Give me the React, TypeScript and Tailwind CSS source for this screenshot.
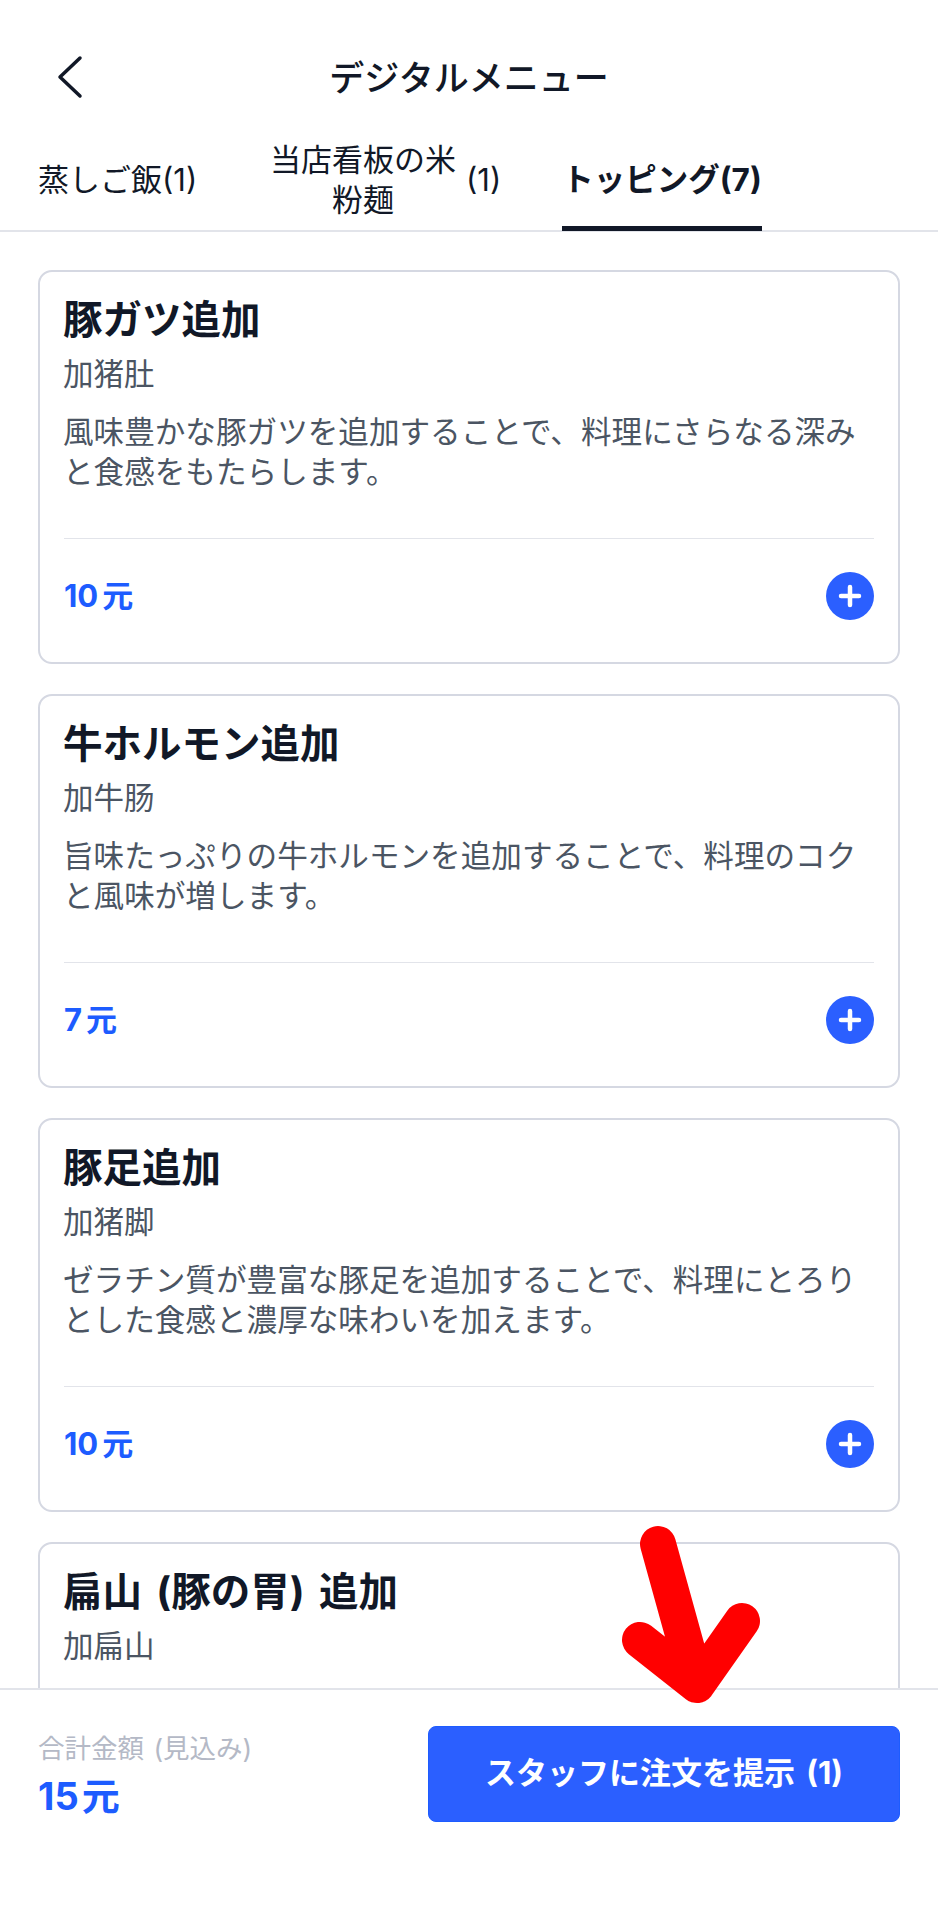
const items = [
  {
    title: '豚ガツ追加',
    sub: '加猪肚',
    desc: '風味豊かな豚ガツを追加することで、料理にさらなる深みと食感をもたらします。',
    price: '10',
  },
  {
    title: '牛ホルモン追加',
    sub: '加牛肠',
    desc: '旨味たっぷりの牛ホルモンを追加することで、料理のコクと風味が増します。',
    price: '7',
  },
  {
    title: '豚足追加',
    sub: '加猪脚',
    desc: 'ゼラチン質が豊富な豚足を追加することで、料理にとろりとした食感と濃厚な味わいを加えます。',
    price: '10',
  },
]

function PlusButton() {
  return (
    <button className="flex h-12 w-12 items-center justify-center rounded-full bg-[#2b5fff]" aria-label="追加">
      <svg width="26" height="26" viewBox="0 0 26 26" fill="none" stroke="white" strokeWidth="4.5" strokeLinecap="round">
        <path d="M13 4v18M4 13h18" />
      </svg>
    </button>
  )
}

function MenuCard({ item }: { item: (typeof items)[number] }) {
  return (
    <div className="h-[394px] shrink-0 rounded-[14px] border-2 border-[#d5d8e2] bg-white px-6 pt-6">
      <h3 className="-ml-px text-[39.5px] leading-[48px] font-bold text-[#111827]">{item.title}</h3>
      <p className="mt-[10px] -ml-px text-[30.5px] leading-[40px] text-[#4b5563]">{item.sub}</p>
      <p className="mt-[18px] -ml-px h-[80px] text-[30.6px] leading-[40px] text-[#4b5563]">{item.desc}</p>
      <div className="mt-[46px] border-t border-[#e2e4ea]" />
      <div className="mt-[33px] flex items-center justify-between">
        <span className="text-[31px] leading-[48px] font-bold text-[#1d5cff]">
          {item.price}
          <span className="ml-1">元</span>
        </span>
        <PlusButton />
      </div>
    </div>
  )
}

export default function App() {
  return (
    <div className="relative flex h-[1920px] w-[938px] flex-col overflow-hidden bg-white font-['Inter','Noto_Sans_CJK_JP',sans-serif] text-[#111827]">
      {/* Header */}
      <header className="relative flex h-[120px] shrink-0 items-start justify-center pt-[53px]">
        <svg className="absolute top-[55px] left-[56px]" width="28" height="44" viewBox="0 0 28 44" fill="none" stroke="#111827" strokeWidth="3.5" strokeLinecap="round" strokeLinejoin="round">
          <path d="M24 3L4 22l20 19" />
        </svg>
        <h1 className="text-[35px] leading-[50px] font-medium">デジタルメニュー</h1>
      </header>

      {/* Tabs */}
      <nav className="flex h-[112px] shrink-0 items-center border-b-2 border-[#e2e4ea] pt-[10px] pl-[38px] text-[31px]">
        <span className="w-[232px] shrink-0 whitespace-nowrap">蒸しご飯(1)</span>
        <span className="flex w-[292px] shrink-0 items-center">
          <span className="w-[186px] text-center leading-[40px]">当店看板の米粉麺</span>
          <span className="ml-2.5">(1)</span>
        </span>
        <span className="relative flex h-full w-[200px] shrink-0 items-center justify-center text-[31.5px] font-bold whitespace-nowrap">
          トッピング(7)
          <span className="absolute right-0 -bottom-[1px] left-0 h-[5px] bg-[#111827]" />
        </span>
      </nav>

      {/* List */}
      <main className="flex min-h-0 flex-1 flex-col gap-[30px] overflow-hidden px-[38px] pt-[38px]">
        {items.map((item) => (
          <MenuCard key={item.title} item={item} />
        ))}
        <div className="h-[394px] shrink-0 rounded-[14px] border-2 border-[#d5d8e2] bg-white px-6 pt-6">
          <h3 className="-ml-px text-[39.5px] leading-[48px] font-bold text-[#111827] [word-spacing:5px]">扁山 (豚の胃) 追加</h3>
          <p className="mt-[10px] -ml-px text-[30.5px] leading-[40px] text-[#4b5563]">加扁山</p>
        </div>
      </main>

      {/* Footer */}
      <footer className="flex h-[232px] shrink-0 items-start justify-between border-t-2 border-[#e2e4ea] bg-white px-[38px] pt-[36px]">
        <div>
          <p className="mt-[4px] text-[26.5px] leading-[36px] text-[#b4b9c6] [word-spacing:2px]">合計金額 (見込み)</p>
          <p className="mt-[5px] text-[38px] leading-[50px] font-bold text-[#1d5cff]">
            15<span className="ml-[3px]">元</span>
          </p>
        </div>
        <button className="h-[96px] w-[472px] rounded-[8px] border border-[#1d5cff] bg-[#2b5fff] pb-[2px] text-[31px] font-bold text-white [word-spacing:4px]">
          スタッフに注文を提示 (1)
        </button>
      </footer>

      {/* Red annotation arrow */}
      <svg className="pointer-events-none absolute top-0 left-0" width="938" height="1920" fill="none" stroke="#ff0000" strokeWidth="36" strokeLinecap="round" strokeLinejoin="round">
        <path d="M658 1544L697 1685M640 1640L697 1685L742 1621" />
      </svg>
    </div>
  )
}
